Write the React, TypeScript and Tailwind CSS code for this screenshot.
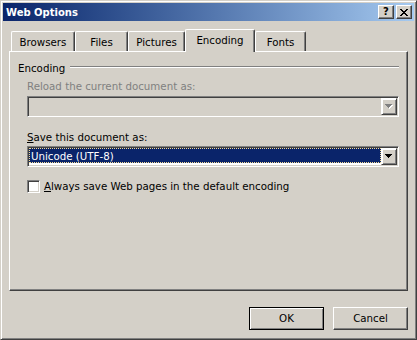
const raised =
  "border border-t-white border-l-white border-r-[#404040] border-b-[#404040] shadow-[inset_-1px_-1px_0_#808080]";
const sunken =
  "border border-t-[#808080] border-l-[#808080] border-r-white border-b-white shadow-[inset_1px_1px_0_#404040,inset_-1px_-1px_0_#d4d0c8]";

function Arrow({ disabled }: { disabled?: boolean }) {
  const d = "M0 0h7v1H0zM1 1h5v1H1zM2 2h3v1H2zM3 3h1v1H3z";
  return (
    <svg width="8" height="5" viewBox="0 0 8 5" shapeRendering="crispEdges">
      {disabled ? <path d={d} fill="#fff" transform="translate(1 1)" /> : null}
      <path d={d} fill={disabled ? "#808080" : "#000"} />
    </svg>
  );
}

function CloseGlyph() {
  return (
    <svg width="8" height="7" viewBox="0 0 8 7" shapeRendering="crispEdges">
      <path
        d="M0 0h2v1H0zM6 0h2v1H6zM1 1h2v1H1zM5 1h2v1H5zM2 2h4v1H2zM3 3h2v1H3zM2 4h4v1H2zM1 5h2v1H1zM5 5h2v1H5zM0 6h2v1H0zM6 6h2v1H6z"
        fill="#000"
      />
    </svg>
  );
}

function TitleButton({ children }: { children: React.ReactNode }) {
  return (
    <div
      className={`flex h-[14px] w-[16px] items-center justify-center bg-[#d4d0c8] ${raised}`}
    >
      {children}
    </div>
  );
}

function Combo({
  disabled,
  children,
}: {
  disabled?: boolean;
  children?: React.ReactNode;
}) {
  return (
    <div
      className={`flex h-[21px] ${sunken} p-px ${disabled ? "bg-[#d4d0c8]" : "bg-white"}`}
    >
      <div className="min-w-0 flex-1">{children}</div>
      <div
        className={`flex h-[17px] w-[16px] items-center justify-center bg-[#d4d0c8] ${raised} shadow-[inset_1px_1px_0_#fff,inset_-1px_-1px_0_#808080] border-t-[#d4d0c8] border-l-[#d4d0c8]`}
      >
        <Arrow disabled={disabled} />
      </div>
    </div>
  );
}

const tabs = [
  { label: "Browsers", w: "w-[64px]" },
  { label: "Files", w: "w-[53px]" },
  { label: "Pictures", w: "w-[57px]" },
  { label: "Encoding", w: "w-[70px]", active: true },
  { label: "Fonts", w: "w-[51px]" },
];

export default function App() {
  return (
    <div className="h-[340px] w-[417px] bg-[#d4d0c8] font-['DejaVu_Sans',sans-serif] text-[10.25px] leading-[13px] text-black">
      <div className="flex h-full flex-col border border-t-[#d4d0c8] border-l-[#d4d0c8] border-r-[#404040] border-b-[#404040] p-[2px] shadow-[inset_1px_1px_0_#fff,inset_-1px_-1px_0_#808080]">
        {/* title bar */}
        <div className="flex h-[18px] items-center bg-linear-to-r from-[#0a246a] to-[#a6caf0] pl-[3px] pr-[2px]">
          <span className="flex-1 text-[10px] font-bold text-white">Web Options</span>
          <div className="flex gap-[2px]">
            <TitleButton>
              <span className="text-[10px] font-bold leading-none">?</span>
            </TitleButton>
            <TitleButton>
              <CloseGlyph />
            </TitleButton>
          </div>
        </div>

        <div className="flex flex-1 flex-col px-[6px] pt-[8px]">
          {/* tabs */}
          <div className="flex h-[22px] items-end pl-[2px]">
            {tabs.map((t) => (
              <div
                key={t.label}
                className={`${t.w} rounded-t-[2px] border-t border-l border-r border-t-white border-l-white border-r-[#404040] bg-[#d4d0c8] pt-[4px] text-center shadow-[inset_-1px_0_0_#808080] ${
                  t.active ? "relative z-10 -mb-px h-[23px]" : "h-[20px]"
                }`}
              >
                {t.label}
              </div>
            ))}
          </div>

          {/* panel */}
          <div className="h-[240px] border border-t-white border-l-white border-r-[#404040] border-b-[#404040] pl-[8px] pr-[8px] pt-[10px] shadow-[inset_-1px_-1px_0_#808080]">
            <div className="flex items-start">
              <span>Encoding</span>
              <div className="ml-[5px] mt-[4px] h-[2px] flex-1 border-t border-b border-t-[#808080] border-b-white" />
            </div>

            <div className="pl-[9px]">
              <div className="mt-[5px] text-[#808080]">Reload the current document as:</div>
              <div className="mt-[3px]">
                <Combo disabled />
              </div>

              <div className="mt-[14px]">
                <span className="underline">S</span>ave this document as:
              </div>
              <div className="mt-[2px]">
                <Combo>
                  <div className="h-[15px] border border-dotted border-[#f5db95] bg-[#0a246a] pl-[1px] pt-px text-white">
                    Unicode (UTF-8)
                  </div>
                </Combo>
              </div>

              <div className="mt-[13px] flex items-center gap-[4px]">
                <div className={`h-[13px] w-[13px] bg-white ${sunken}`} />
                <span>
                  <span className="underline">A</span>lways save Web pages in the default encoding
                </span>
              </div>
            </div>
          </div>

          {/* buttons */}
          <div className="mt-[16px] flex justify-end gap-[9px]">
            <button
              type="button"
              className="h-[23px] w-[75px] border border-black bg-[#d4d0c8] shadow-[inset_1px_1px_0_#fff,inset_-1px_-1px_0_#808080]"
            >
              OK
            </button>
            <button
              type="button"
              className={`h-[23px] w-[75px] bg-[#d4d0c8] ${raised}`}
            >
              Cancel
            </button>
          </div>
        </div>
      </div>
    </div>
  );
}
